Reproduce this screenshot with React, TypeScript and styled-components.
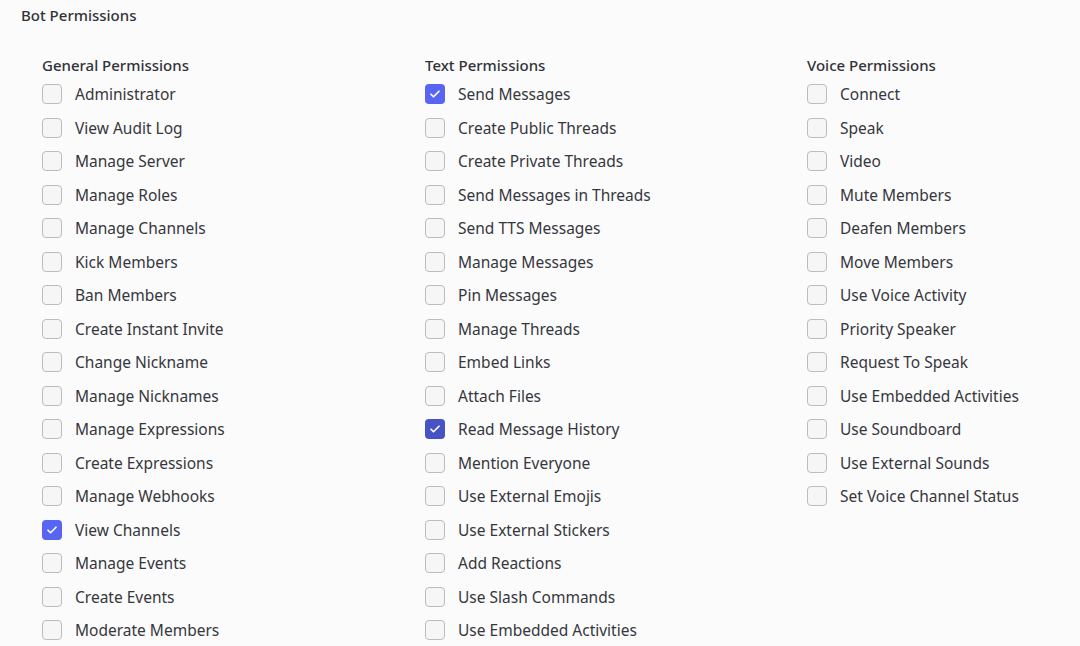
import styled, { createGlobalStyle } from 'styled-components';

const GlobalStyle = createGlobalStyle`
  body {
    margin: 0;
    background: #fbfbfb;
    font-family: 'Noto Sans', 'Open Sans', sans-serif;
  }
`;

const Page = styled.div`
  padding: 5px 0 0 21px;
`;

const Title = styled.div`
  font-size: 15px;
  line-height: 20px;
  font-weight: 500;
  color: #313338;
`;

const Grid = styled.div`
  display: grid;
  grid-template-columns: 383px 382px 1fr;
  padding: 30px 0 0 21px;
`;

const Column = styled.div`
  display: flex;
  flex-direction: column;
`;

const Heading = styled.div`
  font-size: 15px;
  line-height: 20px;
  font-weight: 500;
  color: #313338;
  margin-bottom: 2.25px;
`;

const Row = styled.label`
  display: flex;
  align-items: center;
  gap: 13px;
  height: 33.5px;
  font-size: 15.5px;
  color: #36373d;
`;

const Box = styled.span<{ $checked?: boolean; $dark?: boolean }>`
  box-sizing: border-box;
  flex: none;
  width: 20px;
  height: 20px;
  border-radius: 4px;
  display: flex;
  align-items: center;
  justify-content: center;
  border: 1px solid ${(p) => (p.$checked ? 'transparent' : '#b9bcc2')};
  background: ${(p) => (p.$checked ? (p.$dark ? '#4752c4' : '#5865f2') : '#f6f6f7')};
`;

type Perm = { name: string; checked?: boolean; dark?: boolean };

const columns: { title: string; items: Perm[] }[] = [
  {
    title: 'General Permissions',
    items: [
      { name: 'Administrator' },
      { name: 'View Audit Log' },
      { name: 'Manage Server' },
      { name: 'Manage Roles' },
      { name: 'Manage Channels' },
      { name: 'Kick Members' },
      { name: 'Ban Members' },
      { name: 'Create Instant Invite' },
      { name: 'Change Nickname' },
      { name: 'Manage Nicknames' },
      { name: 'Manage Expressions' },
      { name: 'Create Expressions' },
      { name: 'Manage Webhooks' },
      { name: 'View Channels', checked: true },
      { name: 'Manage Events' },
      { name: 'Create Events' },
      { name: 'Moderate Members' },
    ],
  },
  {
    title: 'Text Permissions',
    items: [
      { name: 'Send Messages', checked: true },
      { name: 'Create Public Threads' },
      { name: 'Create Private Threads' },
      { name: 'Send Messages in Threads' },
      { name: 'Send TTS Messages' },
      { name: 'Manage Messages' },
      { name: 'Pin Messages' },
      { name: 'Manage Threads' },
      { name: 'Embed Links' },
      { name: 'Attach Files' },
      { name: 'Read Message History', checked: true, dark: true },
      { name: 'Mention Everyone' },
      { name: 'Use External Emojis' },
      { name: 'Use External Stickers' },
      { name: 'Add Reactions' },
      { name: 'Use Slash Commands' },
      { name: 'Use Embedded Activities' },
    ],
  },
  {
    title: 'Voice Permissions',
    items: [
      { name: 'Connect' },
      { name: 'Speak' },
      { name: 'Video' },
      { name: 'Mute Members' },
      { name: 'Deafen Members' },
      { name: 'Move Members' },
      { name: 'Use Voice Activity' },
      { name: 'Priority Speaker' },
      { name: 'Request To Speak' },
      { name: 'Use Embedded Activities' },
      { name: 'Use Soundboard' },
      { name: 'Use External Sounds' },
      { name: 'Set Voice Channel Status' },
    ],
  },
];

const Check = () => (
  <svg width="12" height="12" viewBox="0 0 24 24" fill="none">
    <path d="M4 12.5l5 5L20 6.5" stroke="#fff" strokeWidth="3.4" strokeLinecap="round" strokeLinejoin="round" />
  </svg>
);

const App: React.FC = () => {
  return (
    <>
      <GlobalStyle />
      <Page>
        <Title>Bot Permissions</Title>
        <Grid>
          {columns.map((col) => (
            <Column key={col.title}>
              <Heading>{col.title}</Heading>
              {col.items.map((item) => (
                <Row key={item.name}>
                  <Box $checked={item.checked} $dark={item.dark}>
                    {item.checked && <Check />}
                  </Box>
                  {item.name}
                </Row>
              ))}
            </Column>
          ))}
        </Grid>
      </Page>
    </>
  );
};

export default App;
